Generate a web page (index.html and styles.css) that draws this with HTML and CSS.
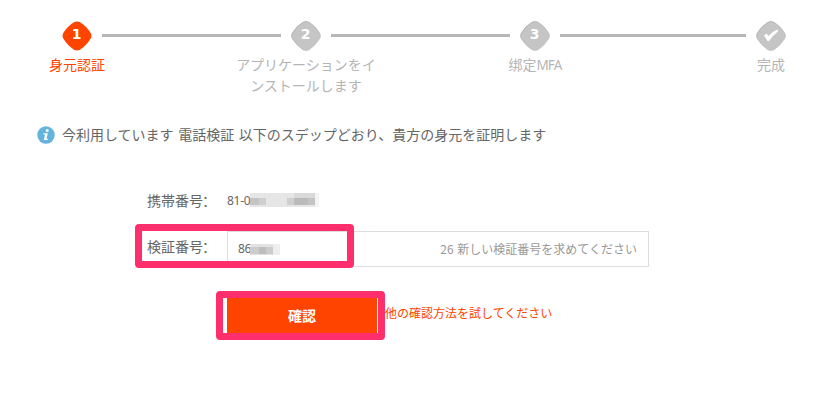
FILE: index.html
```html
<!DOCTYPE html>
<html lang="ja">
<head>
<meta charset="utf-8">
<title>身元認証</title>
<link rel="stylesheet" href="styles.css">
</head>
<body>
<svg width="0" height="0" class="defs"><defs>
<linearGradient id="g" x1="0" y1="0" x2="1" y2="1"><stop offset="0" stop-color="#999"/><stop offset=".5" stop-color="#b4b4b4"/><stop offset="1" stop-color="#c5c5c5"/></linearGradient>
<symbol id="gem" viewBox="0 0 30 30"><path d="M12 1.200Q15 -.3 18 1.200Q24.500 5 28.700 12Q30.200 15 28.700 17.500Q24.500 24.500 18 28.800Q15 30.300 12 28.800Q5.500 24.500 1.300 17.500Q-.2 15 1.300 12Q5.500 5 12 1.200Z"/></symbol>
</defs></svg>
<ol class="steps">
<li class="step active"><span class="badge"><svg class="gem"><use href="#gem"/></svg><b>1</b></span><span class="label">身元認証</span></li>
<li class="line"></li>
<li class="step"><span class="badge"><svg class="gem"><use href="#gem"/></svg><b>2</b></span><span class="label">アプリケーションをインストールします</span></li>
<li class="line"></li>
<li class="step"><span class="badge"><svg class="gem"><use href="#gem"/></svg><b>3</b></span><span class="label" lang="zh">绑定<span class="latin">MFA</span></span></li>
<li class="line last"></li>
<li class="step"><span class="badge"><svg class="gem"><use href="#gem"/></svg><svg class="check" viewBox="0 0 16 13"><path d="M1 6.500L3.500 4.500L5.500 7Q9 2.500 14.500 .5L15 2.500Q9.500 6.500 6 12L4.500 12Z" fill="#fff"/></svg></span><span class="label">完成</span></li>
</ol>
<p class="notice"><svg class="info" viewBox="0 0 18 18"><circle cx="9" cy="9" r="8.700" fill="#63b3df"/><circle cx="10.200" cy="4.500" r="1.500" fill="#fff"/><path d="M6.500 7.200H10.800L9.500 12.800H11L10.700 14H6.700L8.100 8.400H6.200Z" fill="#fff"/></svg><span>今利用しています 電話検証 以下のスデップどおり、貴方の身元を証明します</span></p>
<form class="form">
<div class="row phone"><label>携帯番号<span class="colon" lang="zh-CN">：</span></label><span class="num">81-0</span><svg class="mosaic" width="69" height="14" shape-rendering="crispEdges"><path fill="#e6e6e6" d="M0 0h69v14H0z"/><path fill="#d9d9d9" d="M44 0h21v5H44z"/><path fill="#c4c4c4" d="M0 5h9v7H0zM58 5h7v7h-7z"/><path fill="#cfcfcf" d="M9 5h7v7H9zM37 5h7v7h-7z"/><path fill="#bbb" d="M44 5h14v7H44z"/><path fill="#f3f3f3" d="M65 0h4v14h-4z"/></svg></div>
<div class="row code"><label>検証番号<span class="colon" lang="zh-CN">：</span></label><div class="field"><span class="num">86</span><svg class="mosaic" width="30" height="11" shape-rendering="crispEdges"><path fill="#e2e2e2" d="M0 0h30v11H0z"/><path fill="#ccc" d="M0 3h9v7H0zM16 3h7v7h-7z"/><path fill="#bdbdbd" d="M9 3h7v7H9z"/><path fill="#eee" d="M23 0h7v11h-7z"/></svg><span class="resend">26 新しい検証番号を求めてください</span></div><span class="mark mark-code"></span></div>
<div class="row actions"><button type="button">確認</button><a>他の確認方法を試してください</a><span class="mark mark-ok"></span></div>
</form>
</body>
</html>
```
FILE: styles.css
```css
* { box-sizing: border-box; }
body { margin: 0; min-height: 417px; background: #fff; color: #666; font: 14px/21px "Noto Sans CJK JP", sans-serif; }
.defs { display: block; }
.steps { display: flex; list-style: none; margin: 0; padding: 20px 0 0 52px; height: 123px; }
.step { width: 50px; flex: none; display: flex; flex-direction: column; align-items: center; color: #b5b5b5; }
.badge { display: grid; place-items: center; width: 30px; height: 30px; margin-top: 1px; }
.badge > * { grid-area: 1 / 1; }
.gem { width: 30px; height: 30px; fill: #c5c5c5; stroke: url(#g); stroke-width: .7px; }
.badge b { color: #fff; font: bold 14px/14px "DejaVu Sans", sans-serif; margin-top: -4px; margin-left: -1px; z-index: 1; }
.check { width: 16px; height: 13px; margin-top: -2px; }
.active .gem { fill: #ff4400; stroke: none; }
.active { color: #ff4400; }
.label { width: 144px; flex: none; margin-top: 3px; text-align: center; }
.latin { font-family: "Noto Sans", sans-serif; font-size: 13.5px; letter-spacing: -.8px; }
.line { flex: none; width: 179px; height: 3px; margin-top: 14px; background: #b7b7b7; }
.line.last { width: 186px; }
.notice { display: flex; align-items: center; gap: 7px; height: 22px; margin: 0; padding-left: 37px; word-spacing: 1.5px; }
.info { width: 18px; height: 18px; margin-top: 2px; }
.form { padding: 44px 0 0 147px; }
.row { display: flex; position: relative; }
.row label { width: 80px; flex: none; white-space: nowrap; }
.colon { font-family: "Noto Sans CJK SC", sans-serif; margin-left: -1px; }
.num { font: 12px/18px "Noto Sans", sans-serif; letter-spacing: -.3px; }
.phone { height: 42px; align-items: flex-start; padding-top: 1px; }
.phone .num { margin-top: 2px; }
.phone .mosaic { margin-top: 3px; }
.code label { padding-top: 5px; }
.field { width: 422px; height: 36px; border: 1px solid #ddd; display: flex; align-items: center; padding: 0 11px 0 10px; }
.field .mosaic { margin-left: -1px; }
.resend { margin: -2px 0 0 auto; color: #999; font-size: 12px; word-spacing: 1px; }
.actions { margin-top: 31px; align-items: center; height: 36px; }
button { width: 150px; height: 36px; margin-left: 80px; padding: 0 0 2px; border: 0; background: #ff4400; color: #fff; font: bold 14px "Noto Sans CJK JP", sans-serif; }
.actions a { margin: -7px 0 0 8px; font-size: 12px; color: #ff4400; }
.mark { position: absolute; border: 7px solid #ff2f6d; border-radius: 4px; }
.mark-code { left: -12px; top: -7px; width: 219px; height: 44px; }
.mark-ok { left: 69px; top: -7px; width: 169px; height: 49px; }
```
